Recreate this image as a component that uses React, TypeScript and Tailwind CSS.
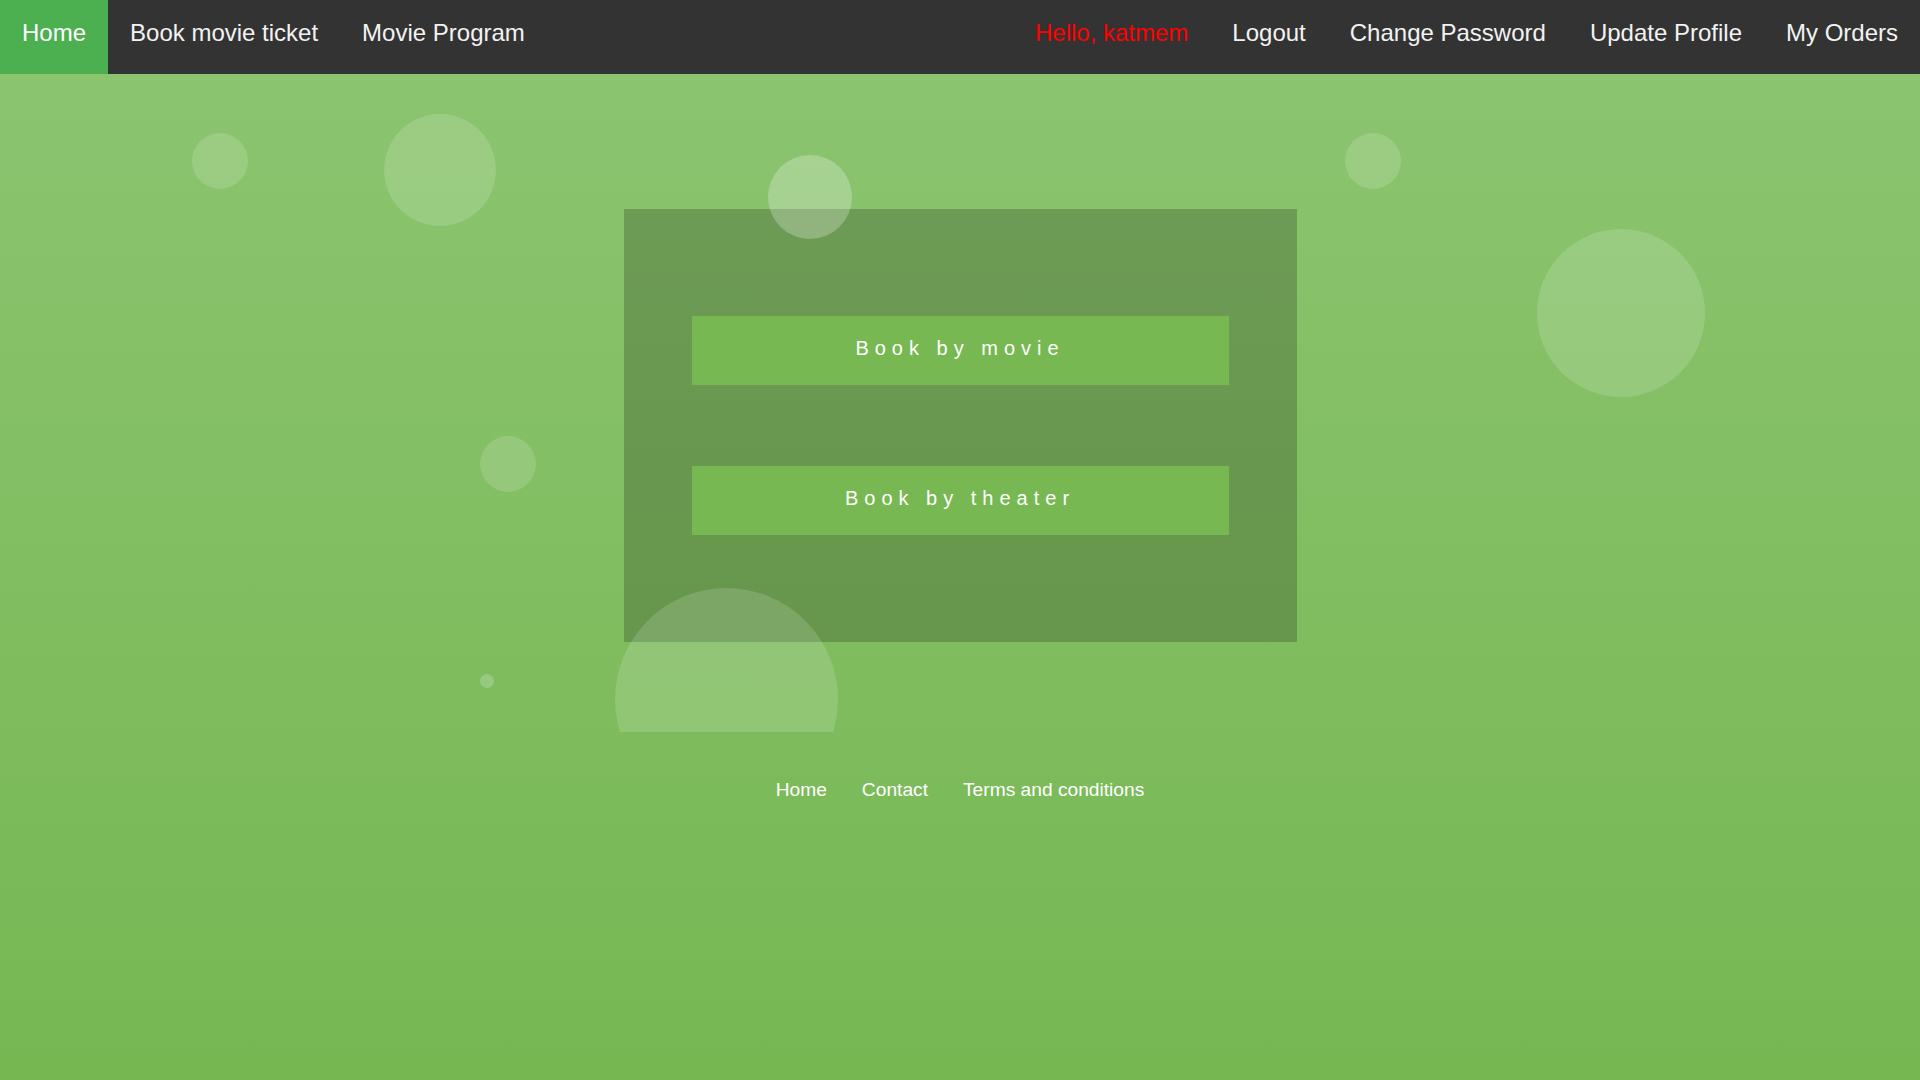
const navLeft = ["Book movie ticket", "Movie Program"];
const navRight = ["Logout", "Change Password", "Update Profile", "My Orders"];

// floating bubbles in the background (left, top, size in px, opacity class)
const bubbles = [
  { x: 192, y: 133, d: 56, c: "bg-white/15" },
  { x: 384, y: 114, d: 112, c: "bg-white/15" },
  { x: 768, y: 155, d: 84, c: "bg-white/25" },
  { x: 1345, y: 133, d: 56, c: "bg-white/15" },
  { x: 1537, y: 229, d: 168, c: "bg-white/15" },
  { x: 480, y: 436, d: 56, c: "bg-white/15" },
  { x: 480, y: 674, d: 14, c: "bg-white/20" },
  { x: 615, y: 588, d: 223, c: "bg-white/15" },
];

export default function App() {
  return (
    <div className="min-h-screen w-full bg-gradient-to-b from-[#8dc571] to-[#76b752] font-['Liberation_Sans',Arial,sans-serif]">
      <nav className="flex h-[74px] bg-[#333333] text-[24px] text-[#f2f2f2]">
        <a className="flex items-center px-[22px] pb-[8px] bg-[#4caf50] text-white">Home</a>
        {navLeft.map((n) => (
          <a key={n} className="flex items-center px-[22px] pb-[8px]">{n}</a>
        ))}
        <div className="flex-1" />
        <span className="flex items-center px-[22px] pb-[8px] text-[#ff0000]">Hello, katmem</span>
        {navRight.map((n) => (
          <a key={n} className="flex items-center px-[22px] pb-[8px]">{n}</a>
        ))}
      </nav>

      <div className="relative h-[658px] overflow-hidden pt-[135px]">
        <div className="mx-auto flex w-[673px] flex-col gap-[81px] bg-black/20 px-[68px] py-[107px]">
          <button className="h-[69px] bg-[#77b852] pb-[6px] text-[20px] tracking-[6px] text-white">Book by movie</button>
          <button className="h-[69px] bg-[#77b852] pb-[6px] text-[20px] tracking-[6px] text-white">Book by theater</button>
        </div>
        {bubbles.map((b, i) => (
          <div
            key={i}
            className={`absolute rounded-full ${b.c}`}
            style={{ left: b.x, top: b.y - 74, width: b.d, height: b.d }}
          />
        ))}
      </div>

      <footer className="flex justify-center gap-[35px] pt-[44px] text-[19.2px] text-white">
        <a>Home</a>
        <a>Contact</a>
        <a>Terms and conditions</a>
      </footer>
    </div>
  );
}
